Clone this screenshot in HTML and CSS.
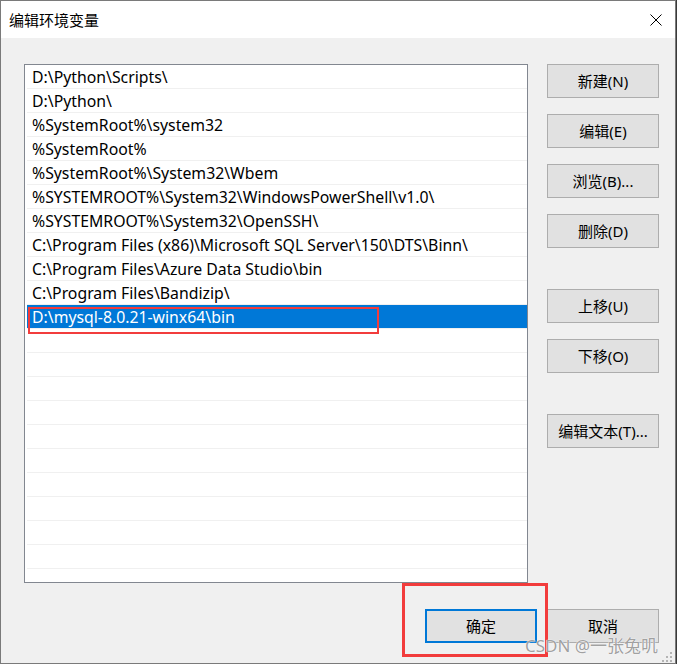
FILE: index.html
```html
<!DOCTYPE html>
<html lang="zh-CN">
<head>
<meta charset="utf-8">
<title>编辑环境变量</title>
<link rel="stylesheet" href="styles.css">
</head>
<body>
<div class="window">
  <div class="titlebar">
    <span class="title">编辑环境变量</span>
    <svg class="close" width="12" height="12" viewBox="0 0 12 12"><path d="M0.5 0.5 L11.5 11.5 M11.5 0.5 L0.5 11.5" stroke="#000" stroke-width="1" fill="none"/></svg>
  </div>
  <div class="content">
    <div class="main">
      <div class="list">
        <div class="rows">
          <div class="row">D:\Python\Scripts\</div>
          <div class="row">D:\Python\</div>
          <div class="row">%SystemRoot%\system32</div>
          <div class="row">%SystemRoot%</div>
          <div class="row">%SystemRoot%\System32\Wbem</div>
          <div class="row">%SYSTEMROOT%\System32\WindowsPowerShell\v1.0\</div>
          <div class="row">%SYSTEMROOT%\System32\OpenSSH\</div>
          <div class="row">C:\Program Files (x86)\Microsoft SQL Server\150\DTS\Binn\</div>
          <div class="row">C:\Program Files\Azure Data Studio\bin</div>
          <div class="row">C:\Program Files\Bandizip\</div>
          <div class="row selected">D:\mysql-8.0.21-winx64\bin</div>
          <div class="row"></div>
          <div class="row"></div>
          <div class="row"></div>
          <div class="row"></div>
          <div class="row"></div>
          <div class="row"></div>
          <div class="row"></div>
          <div class="row"></div>
          <div class="row"></div>
          <div class="row"></div>
          <div class="row"></div>
        </div>
        <div class="mark mark-row"></div>
      </div>
      <div class="buttons">
        <button class="btn">新建(N)</button>
        <button class="btn">编辑(E)</button>
        <button class="btn">浏览(B)...</button>
        <button class="btn">删除(D)</button>
        <button class="btn btn-sep">上移(U)</button>
        <button class="btn">下移(O)</button>
        <button class="btn btn-sep">编辑文本(T)...</button>
      </div>
    </div>
    <div class="footer">
      <button class="btn btn-default">确定</button>
      <button class="btn">取消</button>
    </div>
  </div>
  <div class="mark mark-ok"></div>
  <div class="watermark">CSDN @一张兔叽</div>
  <svg class="grip" width="11" height="10" viewBox="0 0 11 10">
    <rect x="8" y="0" width="2" height="2" fill="#b4b4b4"/>
    <rect x="4" y="4" width="2" height="2" fill="#b4b4b4"/>
    <rect x="8" y="4" width="2" height="2" fill="#b4b4b4"/>
    <rect x="0" y="8" width="2" height="2" fill="#b4b4b4"/>
    <rect x="4" y="8" width="2" height="2" fill="#b4b4b4"/>
    <rect x="8" y="8" width="2" height="2" fill="#b4b4b4"/>
  </svg>
</div>
</body>
</html>
```
FILE: styles.css
```css
* { box-sizing: border-box; }
html, body { margin: 0; padding: 0; }
body {
  width: 677px;
  height: 664px;
  background: #3a3a3a;
  font-family: "Noto Sans", "Noto Sans CJK SC", sans-serif;
  font-size: 15px;
  color: #000;
  overflow: hidden;
}
.window {
  position: relative;
  width: 676px;
  height: 664px;
  border: 1px solid #7a7a7a;
  background: #f0f0f0;
  display: flex;
  flex-direction: column;
}
.titlebar {
  height: 37px;
  background: #fff;
  display: flex;
  align-items: center;
  justify-content: space-between;
  padding: 0 13px 0 8px;
}
.title {
  font-family: "Noto Sans CJK SC", sans-serif;
  font-size: 15px;
  line-height: 20px;
  padding-top: 1px;
}
.close { display: block; }
.content {
  flex: 1;
  padding: 26px 16px 0 23px;
  display: flex;
  flex-direction: column;
}
.main {
  display: flex;
  gap: 19px;
}
.list {
  position: relative;
  width: 504px;
  height: 519px;
  border: 1px solid #828790;
  background: #fff;
  overflow: hidden;
}
.rows {
  padding-left: 2px;
}
.row {
  height: 24px;
  border-bottom: 1px solid #f0f0f0;
  padding: 1px 0 0 5px;
  line-height: 22px;
  font-size: 15.8px;
  white-space: nowrap;
}
.row.selected {
  background: #0078d7;
  color: #fff;
}
.mark {
  position: absolute;
  border: 2px solid #f23c3c;
}
.mark-row {
  left: 3px;
  top: 242px;
  width: 351px;
  height: 27px;
}
.mark-ok {
  left: 401px;
  top: 582px;
  width: 146px;
  height: 74px;
  border-width: 3px;
}
.buttons {
  display: flex;
  flex-direction: column;
  gap: 16px;
  width: 112px;
}
.btn {
  width: 112px;
  height: 34px;
  margin: 0;
  padding: 0 0 1px;
  background: #e1e1e1;
  border: 1px solid #adadad;
  border-radius: 0;
  font-family: "Noto Sans", "Noto Sans CJK SC", sans-serif;
  font-size: 15px;
  color: #000;
  line-height: 18px;
  white-space: nowrap;
}
.btn-sep { margin-top: 25px; }
.btn-default { border: 2px solid #0078d7; }
.footer {
  display: flex;
  justify-content: flex-end;
  gap: 10px;
  margin-top: 26px;
}
.watermark {
  position: absolute;
  left: 524px;
  top: 638px;
  font-family: "Noto Sans", "Noto Sans CJK SC", sans-serif;
  font-size: 17px;
  line-height: 14px;
  color: rgba(135, 135, 135, 0.8);
  text-shadow: 0 0 1px #fff, 0 0 1px #fff;
  white-space: nowrap;
}
.grip {
  position: absolute;
  right: 2px;
  bottom: 1px;
}
```
